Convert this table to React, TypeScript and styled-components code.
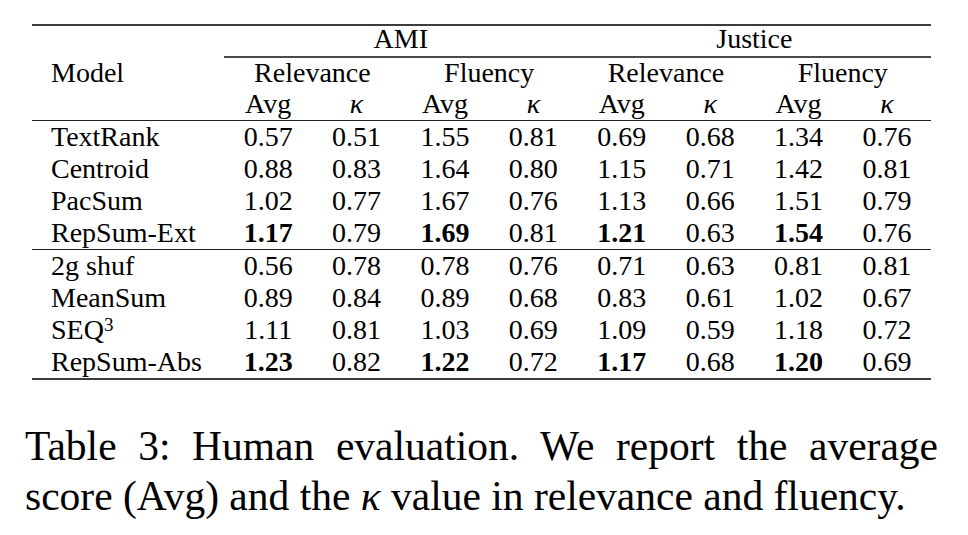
import React from "react";
import styled, { createGlobalStyle } from "styled-components";

const GlobalStyle = createGlobalStyle`
  html, body { margin: 0; padding: 0; background: #ffffff; }
  body {
    font-family: "Liberation Serif", "Times New Roman", serif;
    color: #000000;
  }
`;

const COLS = "192px repeat(8, 88.4px)";

const Page = styled.div`
  width: 968px;
  height: 535px;
  box-sizing: border-box;
  padding-top: 24px;
  display: flex;
  flex-direction: column;
  overflow: hidden;
`;

const Table = styled.div`
  margin-left: 32px;
  width: 899px;
  border-top: 2px solid #3c3c3c;
  border-bottom: 2px solid #3c3c3c;
  font-size: 28px;
`;

const Section = styled.div<{ $rule?: boolean }>`
  display: flex;
  flex-direction: column;
  border-bottom: ${(p) => (p.$rule ? "1px solid #1e1e1e" : "none")};
`;

const Row = styled.div<{ $lh?: number }>`
  display: grid;
  grid-template-columns: ${COLS};
  line-height: ${(p) => p.$lh ?? 32}px;
`;

const GroupBand = styled.div`
  grid-column: 2 / 10;
  display: grid;
  grid-template-columns: 1fr 1fr;
  line-height: 26px;
  padding-bottom: 4px;
  border-bottom: 2px solid #4a4a4a;
`;

const Label = styled.div`
  padding-left: 19px;
  white-space: nowrap;
`;

const Centered = styled.div<{ $span?: number; $bold?: boolean }>`
  grid-column: span ${(p) => p.$span ?? 1};
  text-align: center;
  white-space: nowrap;
  font-weight: ${(p) => (p.$bold ? 700 : 400)};
`;

const Kappa = styled.span`
  font-style: italic;
`;

const Sup = styled.sup`
  font-size: 0.68em;
  line-height: 0;
  vertical-align: 0.42em;
`;

const Caption = styled.div`
  margin-left: 25px;
  margin-top: 41px;
  width: 913px;
  font-size: 41.5px;
  line-height: 50px;
`;

const CaptionLine = styled.div<{ $justify?: boolean }>`
  text-align: ${(p) => (p.$justify ? "justify" : "left")};
  text-align-last: ${(p) => (p.$justify ? "justify" : "left")};
  white-space: ${(p) => (p.$justify ? "normal" : "nowrap")};
`;

type Line = { name: React.ReactNode; vals: string[] };

const top: Line[] = [
  { name: "TextRank", vals: ["0.57", "0.51", "1.55", "0.81", "0.69", "0.68", "1.34", "0.76"] },
  { name: "Centroid", vals: ["0.88", "0.83", "1.64", "0.80", "1.15", "0.71", "1.42", "0.81"] },
  { name: "PacSum", vals: ["1.02", "0.77", "1.67", "0.76", "1.13", "0.66", "1.51", "0.79"] },
  { name: "RepSum-Ext", vals: ["*1.17", "0.79", "*1.69", "0.81", "*1.21", "0.63", "*1.54", "0.76"] },
];

const bottom: Line[] = [
  { name: "2g shuf", vals: ["0.56", "0.78", "0.78", "0.76", "0.71", "0.63", "0.81", "0.81"] },
  { name: "MeanSum", vals: ["0.89", "0.84", "0.89", "0.68", "0.83", "0.61", "1.02", "0.67"] },
  {
    name: (
      <>
        SEQ<Sup>3</Sup>
      </>
    ),
    vals: ["1.11", "0.81", "1.03", "0.69", "1.09", "0.59", "1.18", "0.72"],
  },
  { name: "RepSum-Abs", vals: ["*1.23", "0.82", "*1.22", "0.72", "*1.17", "0.68", "*1.20", "0.69"] },
];

const DataRow = ({ line }: { line: Line }) => (
  <Row>
    <Label>{line.name}</Label>
    {line.vals.map((v, i) => {
      const bold = v.startsWith("*");
      return (
        <Centered key={i} $bold={bold}>
          {bold ? v.slice(1) : v}
        </Centered>
      );
    })}
  </Row>
);

export default function App() {
  return (
    <>
      <GlobalStyle />
      <Page>
        <Table>
          <Section $rule>
            <Row $lh={26}>
              <div />
              <GroupBand>
                <Centered>AMI</Centered>
                <Centered>Justice</Centered>
              </GroupBand>
            </Row>
            <Row $lh={30}>
              <Label>Model</Label>
              <Centered $span={2}>Relevance</Centered>
              <Centered $span={2}>Fluency</Centered>
              <Centered $span={2}>Relevance</Centered>
              <Centered $span={2}>Fluency</Centered>
            </Row>
            <Row>
              <div />
              {[0, 1, 2, 3].map((i) => (
                <React.Fragment key={i}>
                  <Centered>Avg</Centered>
                  <Centered>
                    <Kappa>κ</Kappa>
                  </Centered>
                </React.Fragment>
              ))}
            </Row>
          </Section>
          <Section $rule>
            {top.map((l, i) => (
              <DataRow key={i} line={l} />
            ))}
          </Section>
          <Section>
            {bottom.map((l, i) => (
              <DataRow key={i} line={l} />
            ))}
          </Section>
        </Table>
        <Caption>
          <CaptionLine $justify>Table 3: Human evaluation. We report the average</CaptionLine>
          <CaptionLine>
            score (Avg) and the <Kappa>κ</Kappa> value in relevance and fluency.
          </CaptionLine>
        </Caption>
      </Page>
    </>
  );
}
